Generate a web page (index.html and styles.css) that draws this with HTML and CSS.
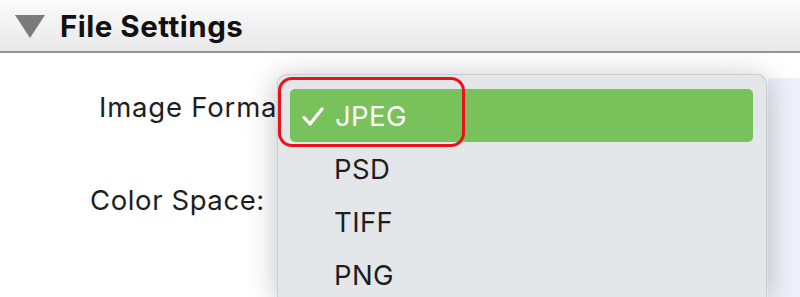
FILE: index.html
```html
<!DOCTYPE html>
<html lang="en">
<head>
    <meta charset="UTF-8">
    <meta name="viewport" content="width=device-width, initial-scale=1.0">
    <title>File Settings</title>
    <link rel="stylesheet" href="styles.css">
</head>
<body>
    <!-- Section header -->
    <div class="section-header">
        <span class="disclosure"></span>
        <h1>File Settings</h1>
    </div>

    <!-- Section body -->
    <div class="section-body">
        <div class="fields">
            <div class="field field-format">Image Format:</div>
            <div class="field field-space">Color Space:</div>
        </div>
        <div class="side-panel"></div>

        <!-- Popup menu -->
        <div class="popup-menu">
            <div class="menu-item selected">
                <svg class="check" width="22" height="20" viewBox="0 0 22 20">
                    <path d="M2 10.5 L8 17 L20 2" fill="none" stroke="#fff" stroke-width="3.2" stroke-linecap="round" stroke-linejoin="round"/>
                </svg>
                <span>JPEG</span>
            </div>
            <div class="menu-item"><span>PSD</span></div>
            <div class="menu-item"><span>TIFF</span></div>
            <div class="menu-item"><span>PNG</span></div>

            <div class="callout"></div>
        </div>
    </div>
</body>
</html>
```

FILE: styles.css
```css
:root {
    /* Colors */
    --header-top: #fbfbfb;
    --header-bottom: #e8e8e8;
    --header-line: #939393;
    --text-color: #1e1e1e;
    --menu-bg: #e4e7ea;
    --menu-border: #c9ccd0;
    --selected-bg: #79c15b;
    --panel-bg: #eef1f9;
    --callout-red: #e8121b;
}

body {
    margin: 0;
    padding: 0;
    width: 800px;
    height: 297px;
    overflow: hidden;
    background-color: #ffffff;
    font-family: 'Inter', 'Helvetica Neue', Arial, sans-serif;
    color: var(--text-color);
}

/* Header */
.section-header {
    height: 51px;
    display: flex;
    align-items: center;
    gap: 15px;
    padding-left: 15px;
    background: linear-gradient(to bottom, var(--header-top), var(--header-bottom));
    border-bottom: 2px solid var(--header-line);
}

.disclosure {
    width: 0;
    height: 0;
    border-left: 15px solid transparent;
    border-right: 15px solid transparent;
    border-top: 23px solid #7b7b7b;
    margin-top: 1px;
}

h1 {
    margin: 0;
    font-size: 29.5px;
    font-weight: bold;
    letter-spacing: 0.5px;
    color: #111111;
}

/* Body */
.section-body {
    position: relative;
    height: 244px;
    display: flex;
    overflow: hidden;
}

.fields {
    flex: 1;
    display: flex;
    flex-direction: column;
    font-size: 27.5px;
    line-height: 32px;
    letter-spacing: 0.6px;
}

.field {
    white-space: nowrap;
}

.field-format {
    padding-left: 99px;
    letter-spacing: 0.8px;
    margin-top: 38px;
}

.field-space {
    padding-left: 90px;
    margin-top: 61px;
}

.side-panel {
    width: 32px;
    margin-top: 25px;
    background-color: var(--panel-bg);
}

/* Popup menu */
.popup-menu {
    position: absolute;
    left: 277px;
    top: 21px;
    box-sizing: border-box;
    width: 490px;
    height: 223px;
    padding: 14px 13px 0 12px;
    background-color: var(--menu-bg);
    border: 1px solid var(--menu-border);
    border-bottom: none;
    border-radius: 10px 10px 0 0;
    box-shadow: 0 4px 30px rgba(0, 0, 0, 0.26);
}

.menu-item {
    height: 53px;
    display: flex;
    align-items: center;
    padding-left: 44px;
    font-size: 27.5px;
    letter-spacing: 0.4px;
    color: var(--text-color);
}

.menu-item.selected {
    padding-left: 12px;
    gap: 11px;
    background-color: var(--selected-bg);
    border-radius: 5px;
    color: #ffffff;
}

.check {
    margin-top: 2px;
}

/* Red annotation box */
.callout {
    position: absolute;
    left: 0;
    top: 2px;
    width: 181px;
    height: 64px;
    border: 3.5px solid var(--callout-red);
    border-radius: 14px;
}
```
